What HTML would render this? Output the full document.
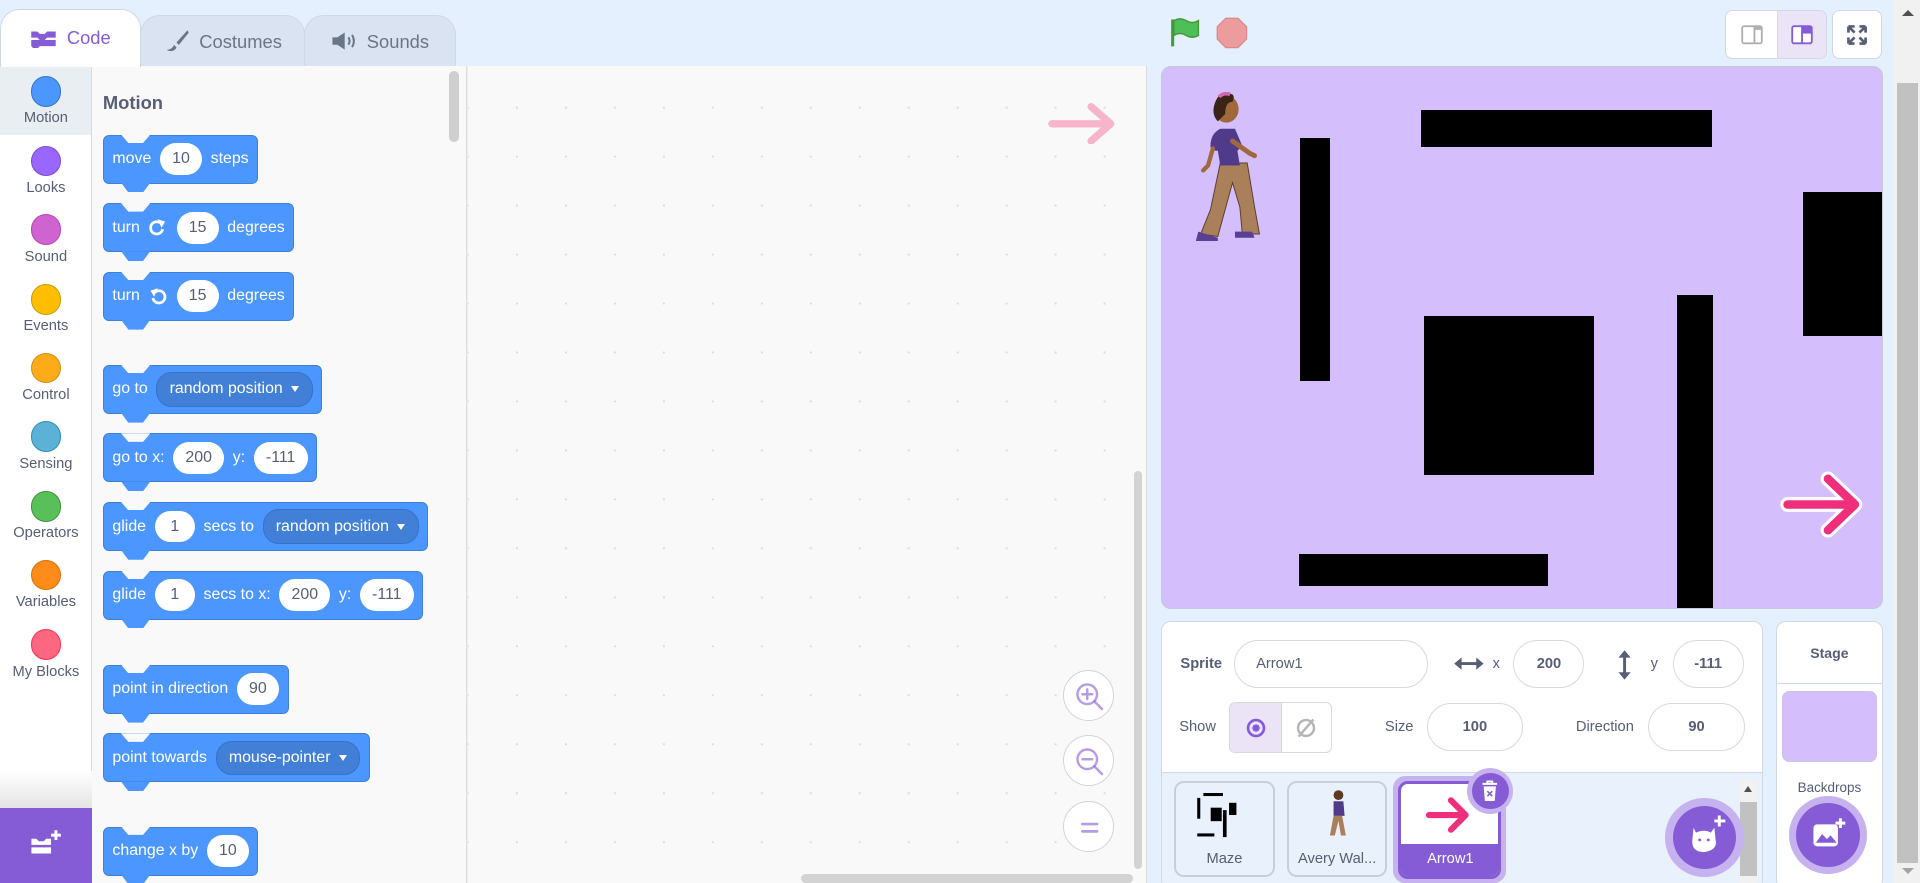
<!DOCTYPE html>
<html><head><meta charset="utf-8">
<style>
*{box-sizing:border-box;margin:0;padding:0}
html,body{width:1920px;height:883px;overflow:hidden;background:#e5f0ff}
#w{zoom:1.2245;width:1568px;height:721px;position:relative;font-family:"Liberation Sans",Arial,sans-serif;background:#e5f0ff;overflow:hidden}
.a{position:absolute}
.tab{position:absolute;top:12px;height:43px;border:1px solid #d0d8e4;border-bottom:none;border-radius:16px 16px 0 0;background:#d9e3f2;color:#6a7585;font-size:15px;display:flex;align-items:center;justify-content:center;gap:8px}
.cat{position:absolute;left:0;width:75px;text-align:center;font-size:12px;color:#575e75}
.cat i{display:block;width:25px;height:25px;border-radius:50%;margin:0 auto 3px}
.blk{position:absolute;left:84px;height:40px;background:#4c97ff;border:1px solid #3d7fd9;border-radius:5px;color:#fff;font-size:13px;display:flex;align-items:center;padding:0 7px;gap:7px;white-space:nowrap}
.blk:before{content:"";position:absolute;left:14px;top:-1px;width:24px;height:7px;background:#f9f9f9;clip-path:polygon(0 0,100% 0,75% 100%,25% 100%)}
.blk:after{content:"";position:absolute;left:14px;bottom:-8px;width:24px;height:8px;background:#4c97ff;clip-path:polygon(0 0,100% 0,75% 100%,25% 100%)}
.in{background:#fff;color:#575e75;border-radius:13px;height:26px;min-width:33px;padding:0 10px;display:flex;align-items:center;justify-content:center}
.dd{background:#4280d7;border:1px solid #3373cc;border-radius:13px;height:28px;padding:0 10px;display:flex;align-items:center;gap:7px}
.dd b{width:0;height:0;border-left:4px solid transparent;border-right:4px solid transparent;border-top:5px solid #fff}
.zb{position:absolute;left:868px;width:42px;height:42px;border-radius:50%;background:#fff;border:1px solid #d0d4dc}
.blk-s{position:absolute;background:#000}
.fld{position:absolute;height:39px;border:1px solid #d9d9d9;border-radius:20px;background:#fff;font-size:12px;color:#575e75;display:flex;align-items:center;justify-content:center;font-weight:bold}
.lbl{position:absolute;font-size:12px;color:#575e75}
</style></head><body><div id="w">

<div class="tab" style="left:0;top:7px;width:115px;height:48px;background:#fff;color:#855cd6;z-index:2">
<svg width="22" height="16" viewBox="0 0 22 16"><path d="M1 2h5l2 2h4l2-2h7v5h-7l-2 2H8L6 7H1z M1 9h20v5H8l-2 2H3l-2-2z" fill="#855cd6"/></svg>Code</div>
<div class="tab" style="left:114px;width:135px">
<svg width="22" height="20" viewBox="0 0 22 20"><path d="M20 1 L11 11 L13 13 L21 3z" fill="#6a7585"/><path d="M3 17c2 0 5-1 6-4l2 2c-1 3-5 4-8 2z" fill="#6a7585"/></svg>Costumes</div>
<div class="tab" style="left:248px;width:124px">
<svg width="22" height="18" viewBox="0 0 22 18"><path d="M2 6h4l6-4v14l-6-4H2z" fill="#6a7585"/><path d="M15 6q2 3 0 6M18 4q3 5 0 10" stroke="#6a7585" stroke-width="1.6" fill="none"/></svg>Sounds</div>

<div class="a" style="left:0;top:54px;width:75px;height:607px;background:#fff;border-right:1px solid #d9d9d9"></div>
<div class="a" style="left:0;top:55px;width:74px;height:55px;background:#e9eef2"></div>
<div class="cat" style="top:62px"><i style="background:#4c97ff;border:1px solid #3373cc"></i>Motion</div>
<div class="cat" style="top:119px"><i style="background:#9966ff;border:1px solid #774dcb"></i>Looks</div>
<div class="cat" style="top:175px"><i style="background:#cf63cf;border:1px solid #bd42bd"></i>Sound</div>
<div class="cat" style="top:232px"><i style="background:#ffbf00;border:1px solid #cc9900"></i>Events</div>
<div class="cat" style="top:288px"><i style="background:#ffab19;border:1px solid #cf8b17"></i>Control</div>
<div class="cat" style="top:344px"><i style="background:#5cb1d6;border:1px solid #2e8eb8"></i>Sensing</div>
<div class="cat" style="top:401px"><i style="background:#59c059;border:1px solid #389438"></i>Operators</div>
<div class="cat" style="top:457px"><i style="background:#ff8c1a;border:1px solid #db6e00"></i>Variables</div>
<div class="cat" style="top:514px"><i style="background:#ff6680;border:1px solid #ff3355"></i>My Blocks</div>
<div class="a" style="left:0;top:630px;width:75px;height:30px;background:linear-gradient(#fff,#e4e4e4)"></div>
<div class="a" style="left:0;top:660px;width:75px;height:61px;background:#855cd6">
<svg class="a" style="left:24px;top:17px" width="28" height="26" viewBox="0 0 28 26"><path d="M2 8h4l2 2h4l2-2h4v5H2z M2 15h16v5H2z" fill="#fff"/><path d="M22 1v8M18 5h8" stroke="#fff" stroke-width="2.4"/></svg></div>

<div class="a" style="left:75px;top:54px;width:306px;height:667px;background:#f9f9f9;border-right:1px solid #ddd"></div>
<div class="a" style="left:367px;top:58px;width:8px;height:58px;background:#cfcfcf;border-radius:4px"></div>
<div class="a" style="left:84px;top:75px;font-size:15px;font-weight:bold;color:#575e75">Motion</div>

<div class="blk" style="top:110px">move <span class="in">10</span> steps</div>
<div class="blk" style="top:166px">turn <svg width="16" height="16" viewBox="0 0 16 16"><path d="M12 9a5 5 0 1 1-2-5" stroke="#fff" stroke-width="2.2" fill="none"/><path d="M8 1l6 2-3 5z" fill="#fff"/></svg> <span class="in">15</span> degrees</div>
<div class="blk" style="top:222px">turn <svg width="16" height="16" viewBox="0 0 16 16"><path d="M4 9a5 5 0 1 0 2-5" stroke="#fff" stroke-width="2.2" fill="none"/><path d="M8 1L2 3l3 5z" fill="#fff"/></svg> <span class="in">15</span> degrees</div>
<div class="blk" style="top:298px">go to <span class="dd">random position <b></b></span></div>
<div class="blk" style="top:354px">go to x: <span class="in">200</span> y: <span class="in">-111</span></div>
<div class="blk" style="top:410px">glide <span class="in">1</span> secs to <span class="dd">random position <b></b></span></div>
<div class="blk" style="top:466px">glide <span class="in">1</span> secs to x: <span class="in">200</span> y: <span class="in">-111</span></div>
<div class="blk" style="top:543px">point in direction <span class="in">90</span></div>
<div class="blk" style="top:599px">point towards <span class="dd">mouse-pointer <b></b></span></div>
<div class="blk" style="top:675px">change x by <span class="in">10</span></div>

<div class="a" style="left:382px;top:54px;width:555px;height:667px;background-color:#f9f9f9;background-image:radial-gradient(#dcdcdc 0.8px,transparent 1px);background-size:40px 40px;background-position:20px 14px;border-right:1px solid #ddd"></div>
<svg class="a" style="left:855px;top:84px" width="60" height="34" viewBox="0 0 60 34"><path d="M4 17h48M36 3l16 14-16 14" stroke="#f7b5cc" stroke-width="6" stroke-linecap="round" stroke-linejoin="round" fill="none"/></svg>
<div class="a" style="left:926px;top:385px;width:7px;height:325px;background:#d3d3d3;border-radius:4px"></div>
<div class="a" style="left:654px;top:714px;width:271px;height:7px;background:#d3d3d3;border-radius:4px"></div>
<div class="zb" style="top:547px"><svg width="42" height="42" viewBox="0 0 42 42"><circle cx="19" cy="19" r="8" stroke="#855cd6" stroke-width="2" fill="none" opacity=".6"/><path d="M25 25l6 6M15 19h8M19 15v8" stroke="#855cd6" stroke-width="2" stroke-linecap="round" opacity=".6"/></svg></div>
<div class="zb" style="top:600px"><svg width="42" height="42" viewBox="0 0 42 42"><circle cx="19" cy="19" r="8" stroke="#855cd6" stroke-width="2" fill="none" opacity=".6"/><path d="M25 25l6 6M15 19h8" stroke="#855cd6" stroke-width="2" stroke-linecap="round" opacity=".6"/></svg></div>
<div class="zb" style="top:654px"><svg width="42" height="42" viewBox="0 0 42 42"><path d="M15 18h12M15 24h12" stroke="#855cd6" stroke-width="2.2" stroke-linecap="round" opacity=".6"/></svg></div>

<svg class="a" style="left:955px;top:14px" width="26" height="26" viewBox="0 0 26 26"><path d="M3 2v22" stroke="#45993d" stroke-width="2.5"/><path d="M4 3q5-3 10 0t10 0v12q-5 3-10 0t-10 0z" fill="#4cbf56" stroke="#45993d" stroke-width="1.2"/></svg>
<svg class="a" style="left:993px;top:14px" width="26" height="26" viewBox="0 0 26 26"><path d="M8 1h10l7 7v10l-7 7H8l-7-7V8z" fill="#ec9c9c" stroke="#d88a8a"/></svg>
<div class="a" style="left:1409px;top:8px;width:83px;height:40px;border:1px solid #d4d8e0;border-radius:6px;background:#fff;overflow:hidden">
 <div class="a" style="left:41px;top:0;width:41px;height:40px;background:#ebe4f7;border-left:1px solid #d4d8e0"></div>
 <svg class="a" style="left:12px;top:12px" width="18" height="16" viewBox="0 0 18 16"><rect x="1" y="1" width="16" height="14" rx="1.5" fill="#fff" stroke="#b0b0b0" stroke-width="1.5"/><rect x="11" y="1" width="6" height="3" fill="#b0b0b0"/><path d="M11 1v14" stroke="#b0b0b0" stroke-width="1.5"/></svg>
 <svg class="a" style="left:53px;top:12px" width="18" height="16" viewBox="0 0 18 16"><rect x="1" y="1" width="16" height="14" rx="1.5" fill="#fff" stroke="#855cd6" stroke-width="1.5"/><rect x="9" y="1" width="8" height="6" fill="#855cd6"/><path d="M9 1v14" stroke="#855cd6" stroke-width="1.5"/></svg>
</div>
<div class="a" style="left:1496px;top:8px;width:41px;height:40px;border:1px solid #d4d8e0;border-radius:6px;background:#fff">
 <svg class="a" style="left:11px;top:11px" width="18" height="18" viewBox="0 0 18 18"><path d="M2 2l5 5M2 2h5M2 2v5M16 2l-5 5M16 2h-5M16 2v5M2 16l5-5M2 16h5M2 16v-5M16 16l-5-5M16 16h-5M16 16v-5" stroke="#575e75" stroke-width="2.2"/></svg>
</div>

<div class="a" style="left:948px;top:54px;width:590px;height:443px;background:#d4befc;border:1px solid #c8c8d8;border-radius:8px;overflow:hidden">
 <div class="blk-s" style="left:212px;top:35px;width:237px;height:30px"></div>
 <div class="blk-s" style="left:113px;top:58px;width:24px;height:198px"></div>
 <div class="blk-s" style="left:524px;top:102px;width:66px;height:118px"></div>
 <div class="blk-s" style="left:214px;top:203px;width:139px;height:130px"></div>
 <div class="blk-s" style="left:421px;top:186px;width:29px;height:257px"></div>
 <div class="blk-s" style="left:112px;top:398px;width:203px;height:26px"></div>
 <svg class="a" style="left:504px;top:328px" width="74" height="60" viewBox="0 0 74 60"><path d="M7 29h55M40 8l22 21-22 21" stroke="#fff" stroke-width="12" stroke-linecap="round" stroke-linejoin="round" fill="none"/><path d="M7 29h55M40 8l22 21-22 21" stroke="#ef2e7c" stroke-width="7" stroke-linecap="round" stroke-linejoin="round" fill="none"/></svg>
 <svg class="a" style="left:20px;top:20px" width="70" height="122" viewBox="0 0 70 122">
  <path d="M28 58l-8 38-8 20 14 2 6-22 6-22 6 20 2 22 14 0-4-22-6-36z" fill="#a9805a" stroke="#5a3e2a" stroke-width=".8"/>
  <path d="M28 30q-8 4-8 14 0 4 6 4l2 12h16l-2-12 4-4-6-14z" fill="#4f3b8a"/>
  <path d="M38 40l14 10 4 2" stroke="#a0693c" stroke-width="4" stroke-linecap="round" fill="none"/>
  <path d="M22 46l-4 14-4 4" stroke="#a0693c" stroke-width="3.5" stroke-linecap="round" fill="none"/>
  <ellipse cx="33" cy="14" rx="10" ry="11" fill="#a0693c"/>
  <path d="M24 8q4-10 14-6 2 2 0 6-6 0-6 10l-6 6q-6-6-2-16z" fill="#3a2418"/>
  <path d="M27 4q4-4 9-2" stroke="#d06ab0" stroke-width="3" fill="none"/>
  <path d="M10 114l16 5v3H8zM40 114l14 0 2 5H40z" fill="#5a3f95"/>
 </svg>
</div>

<div class="a" style="left:948px;top:507px;width:492px;height:220px;background:#fff;border:1px solid #d0d8e4;border-radius:8px;overflow:hidden">
 <div class="a" style="left:0;top:123px;width:492px;height:100px;background:#e9f1fc;border-top:1px solid #d0d8e4"></div>
</div>
<div class="lbl" style="left:964px;top:536px;font-weight:bold">Sprite</div>
<div class="fld" style="left:1008px;top:523px;width:158px;justify-content:flex-start;padding-left:17px;font-weight:normal;color:#575e75">Arrow1</div>
<svg class="a" style="left:1187px;top:535px" width="26" height="14" viewBox="0 0 26 14"><path d="M5 7h16" stroke="#575e75" stroke-width="2.4"/><path d="M1 7l6-5v10zM25 7l-6-5v10z" fill="#575e75"/></svg>
<div class="lbl" style="left:1219px;top:536px">x</div>
<div class="fld" style="left:1236px;top:523px;width:58px">200</div>
<svg class="a" style="left:1320px;top:530px" width="14" height="26" viewBox="0 0 14 26"><path d="M7 5v16" stroke="#575e75" stroke-width="2.4"/><path d="M7 1l-5 6h10zM7 25l-5-6h10z" fill="#575e75"/></svg>
<div class="lbl" style="left:1348px;top:536px">y</div>
<div class="fld" style="left:1366px;top:523px;width:58px">-111</div>
<div class="lbl" style="left:963px;top:587px">Show</div>
<div class="a" style="left:1004px;top:573px;width:84px;height:42px;border:1px solid #d9d9d9;border-radius:5px;overflow:hidden;background:#fff">
 <div class="a" style="left:0;top:0;width:42px;height:42px;background:#ebe4f7;border-right:1px solid #d9d9d9"></div>
 <svg class="a" style="left:12px;top:12px" width="18" height="18" viewBox="0 0 18 18"><circle cx="9" cy="9" r="6.5" stroke="#855cd6" stroke-width="2.2" fill="none"/><circle cx="9" cy="9" r="3" fill="#855cd6"/></svg>
 <svg class="a" style="left:53px;top:12px" width="18" height="18" viewBox="0 0 18 18"><circle cx="9" cy="9" r="6.5" stroke="#b5b5b5" stroke-width="2" fill="none"/><path d="M3 16L15 2" stroke="#b5b5b5" stroke-width="2"/></svg>
</div>
<div class="lbl" style="left:1131px;top:587px">Size</div>
<div class="fld" style="left:1165px;top:574px;width:79px">100</div>
<div class="lbl" style="left:1287px;top:587px">Direction</div>
<div class="fld" style="left:1346px;top:574px;width:79px">90</div>

<div class="a" style="left:959px;top:638px;width:82px;height:78px;border:2px solid #c8cfdb;border-radius:8px;background:#e9f1fc"></div>
<svg class="a" style="left:977px;top:648px" width="45" height="42" viewBox="0 0 45 42"><rect x="6" y="0" width="16" height="2.5" fill="#000"/><rect x="1" y="4" width="2.5" height="17" fill="#000"/><rect x="12" y="12" width="9" height="11" fill="#000"/><rect x="27" y="8" width="6" height="10" fill="#000"/><rect x="22" y="14" width="3" height="22" fill="#000"/><rect x="1" y="33" width="14" height="2.5" fill="#000"/></svg>
<div class="lbl" style="left:959px;top:695px;width:82px;text-align:center">Maze</div>
<div class="a" style="left:1051px;top:638px;width:82px;height:78px;border:2px solid #c8cfdb;border-radius:8px;background:#e9f1fc"></div>
<svg class="a" style="left:1082px;top:644px" width="22" height="42" viewBox="0 0 22 42"><circle cx="11" cy="5" r="4" fill="#5a3a22"/><path d="M7 10h8l1 12H7z" fill="#4f3b8a"/><path d="M7 22l-3 16h4l3-12 2 12h4l-3-16z" fill="#a9805a"/></svg>
<div class="lbl" style="left:1051px;top:695px;width:82px;text-align:center">Avery Wal...</div>
<div class="a" style="left:1138px;top:634px;width:92px;height:87px;border-radius:10px;background:#c5b2ef"></div>
<div class="a" style="left:1142px;top:638px;width:84px;height:80px;border:3px solid #855cd6;border-radius:8px;background:#fff;overflow:hidden">
 <div class="a" style="left:0;top:49px;width:80px;height:30px;background:#855cd6;color:#fff;font-size:12px;text-align:center;line-height:26px">Arrow1</div>
</div>
<svg class="a" style="left:1163px;top:648px" width="44" height="36" viewBox="0 0 44 36"><path d="M4 18h30M22 6l12 12-12 12" stroke="#ef2e7c" stroke-width="5" stroke-linecap="round" stroke-linejoin="round" fill="none"/></svg>
<div class="a" style="left:1198px;top:627px;width:38px;height:38px;border-radius:50%;background:#c5b2ef"></div>
<div class="a" style="left:1202px;top:631px;width:30px;height:30px;border-radius:50%;background:#855cd6"></div>
<svg class="a" style="left:1209px;top:636px" width="16" height="20" viewBox="0 0 16 20"><path d="M2 4h12M6 4V2h4v2" stroke="#fff" stroke-width="1.6" fill="none"/><path d="M3 6h10l-1 12H4z" fill="#fff"/><path d="M6 10l4 4M10 10l-4 4" stroke="#855cd6" stroke-width="1.3"/></svg>

<div class="a" style="left:1420px;top:637px;width:16px;height:84px;background:#f1f1f1"></div>
<div class="a" style="left:1421px;top:655px;width:14px;height:60px;background:#c1c1c1"></div>
<div class="a" style="left:1424px;top:642px;width:0;height:0;border-left:4px solid transparent;border-right:4px solid transparent;border-bottom:5px solid #505050"></div>

<div class="a" style="left:1360px;top:652px;width:64px;height:64px;border-radius:50%;background:#c5b2ef"></div>
<div class="a" style="left:1366px;top:658px;width:52px;height:52px;border-radius:50%;background:#855cd6"></div>
<svg class="a" style="left:1376px;top:664px" width="36" height="38" viewBox="0 0 36 38"><path d="M7 12l2 4q7-3 12 0l3-4 1 10q2 8-9 10Q5 32 6 22z" fill="#fff"/><path d="M28 2v9M24 6.5h9" stroke="#fff" stroke-width="2.4"/><circle cx="12" cy="22" r="1.2" fill="#855cd6"/><circle cx="19" cy="22" r="1.2" fill="#855cd6"/></svg>

<div class="a" style="left:1450px;top:507px;width:88px;height:220px;background:#fff;border:1px solid #d0d8e4;border-radius:8px;overflow:hidden">
 <div class="a" style="left:0;top:50px;width:88px;height:1px;background:#d0d8e4"></div>
</div>
<div class="lbl" style="left:1450px;top:527px;width:88px;text-align:center;font-weight:bold;font-size:11.5px">Stage</div>
<div class="a" style="left:1455px;top:564px;width:78px;height:58px;border-radius:6px;background:#d4befc;border:1px solid #ccc4e6"></div>
<div class="lbl" style="left:1450px;top:637px;width:88px;text-align:center;font-size:11px">Backdrops</div>
<div class="a" style="left:1461px;top:650px;width:64px;height:64px;border-radius:50%;background:#c5b2ef"></div>
<div class="a" style="left:1467px;top:656px;width:52px;height:52px;border-radius:50%;background:#855cd6"></div>
<svg class="a" style="left:1479px;top:667px" width="30" height="30" viewBox="0 0 30 30"><rect x="2" y="6" width="20" height="18" rx="3" fill="#fff"/><path d="M4 21l5-7 4 4 3-3 5 6z" fill="#855cd6"/><path d="M24 1v8M20 5h8" stroke="#fff" stroke-width="2.4"/></svg>

<div class="a" style="left:1547px;top:0;width:21px;height:721px;background:#f1f1f1"></div>
<div class="a" style="left:1549px;top:68px;width:17px;height:637px;background:#c1c1c1"></div>
<div class="a" style="left:1553px;top:8px;width:0;height:0;border-left:5px solid transparent;border-right:5px solid transparent;border-bottom:5px solid #505050"></div>
<div class="a" style="left:1553px;top:709px;width:0;height:0;border-left:5px solid transparent;border-right:5px solid transparent;border-top:5px solid #a3a3a3"></div>

</div></body></html>
